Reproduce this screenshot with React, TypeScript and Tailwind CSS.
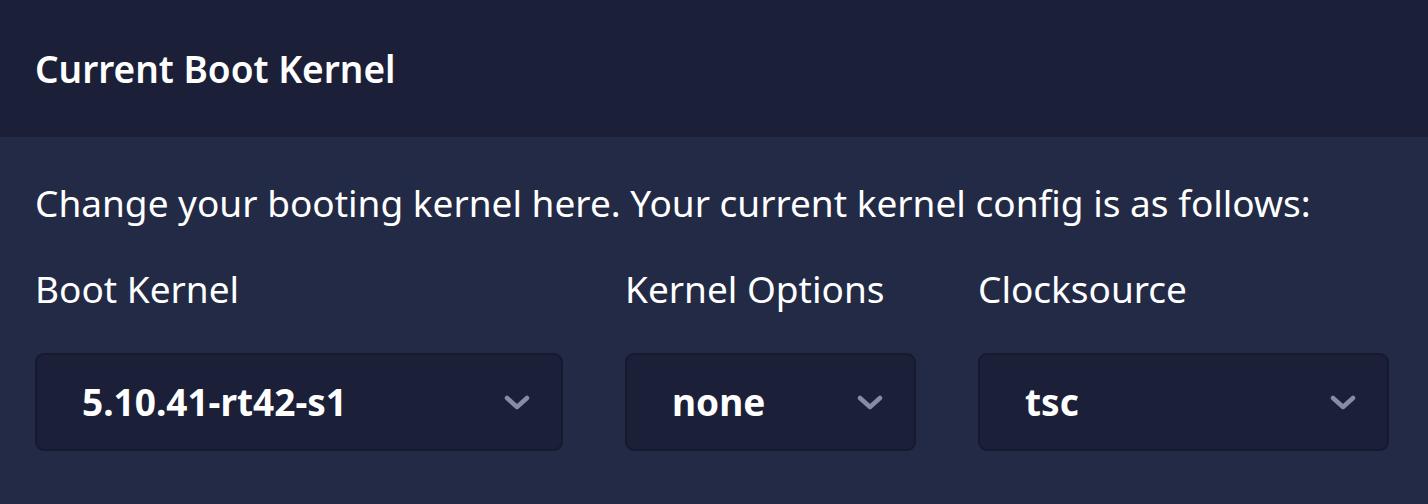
import React from "react";

const fieldData = [
  { label: "Boot Kernel", value: "5.10.41-rt42-s1", width: "w-[528px]" },
  { label: "Kernel Options", value: "none", width: "w-[291px]" },
  { label: "Clocksource", value: "tsc", width: "w-[411px]" },
];

function Chevron() {
  return (
    <svg width="26" height="18" viewBox="0 0 26 18" fill="none">
      <polyline
        points="3,5 13,14 23,5"
        stroke="#868ca6"
        strokeWidth="4.5"
        strokeLinecap="round"
        strokeLinejoin="round"
      />
    </svg>
  );
}

function SelectField({
  label,
  value,
  width,
}: {
  label: string;
  value: string;
  width: string;
}) {
  return (
    <div className={`flex flex-col ${width}`}>
      <label className="text-[37px] leading-[52px] text-white">{label}</label>
      <div className="mt-[38px] flex h-[98px] items-center justify-between rounded-[9px] border-2 border-[#161a2f] bg-[#1b1f38] pl-[45px] pr-[31px]">
        <span className="text-[37px] font-bold text-white">{value}</span>
        <Chevron />
      </div>
    </div>
  );
}

export default function App() {
  return (
    <div
      className="flex h-[504px] flex-col bg-[#222a46] text-white"
      style={{ fontFamily: '"Noto Sans", "Open Sans", sans-serif' }}
    >
      <div className="flex h-[137px] items-center bg-[#1c1f38] px-[35px]">
        <h2 className="text-[37px] font-semibold">Current Boot Kernel</h2>
      </div>

      <div className="flex flex-col px-[35px] pt-[40px]">
        <p className="text-[37px] leading-[52px]">
          Change your booting kernel here. Your current kernel config is as
          follows:
        </p>
        <div className="mt-[34px] flex gap-[62px]">
          {fieldData.map((f) => (
            <SelectField key={f.label} {...f} />
          ))}
        </div>
      </div>
    </div>
  );
}
